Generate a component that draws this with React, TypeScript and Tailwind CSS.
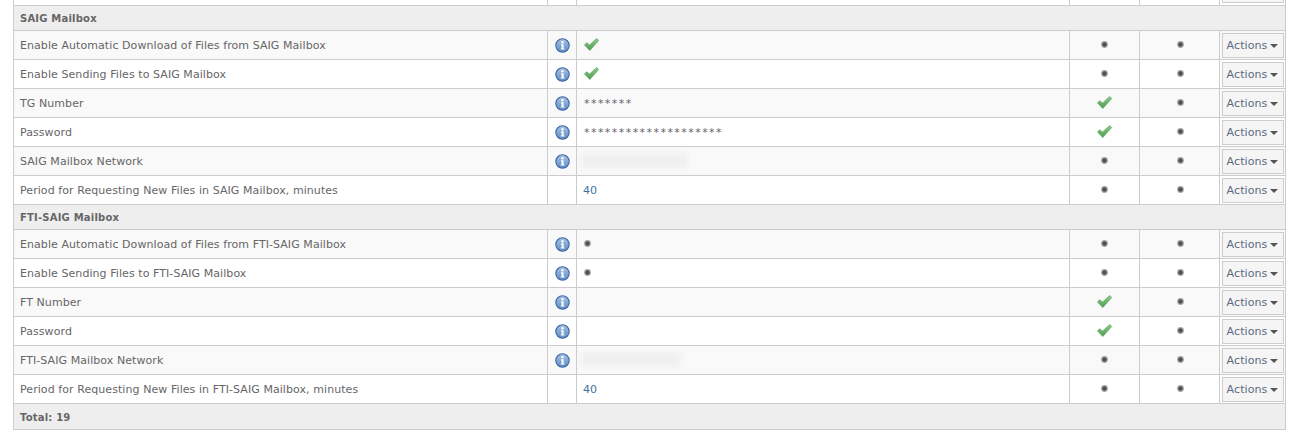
type Value = "check" | "dot" | "";

type Row = {
  label: string;
  info: boolean;
  value: React.ReactNode;
  own: Value;
  inherited: Value;
};

function InfoIcon() {
  return (
    <svg width="15" height="15" viewBox="0 0 15 15" className="block mx-auto">
      <defs>
        <linearGradient id="infoFill" x1="0" y1="0" x2="0" y2="1">
          <stop offset="0" stopColor="#a9c3e2" />
          <stop offset="1" stopColor="#5d8cc4" />
        </linearGradient>
      </defs>
      <circle cx="7.5" cy="7.5" r="6.7" fill="url(#infoFill)" stroke="#3f68a8" strokeWidth="1.1" />
      <circle cx="7.5" cy="4.2" r="1.2" fill="#fff" />
      <path d="M6 6.3h2.6v4.2h.9v1.1H5.7v-1.1h.9V7.4H6z" fill="#fff" />
    </svg>
  );
}

function CheckIcon() {
  return (
    <svg width="15" height="13" viewBox="0 0 15 13" className="block">
      <defs>
        <linearGradient id="checkFill" x1="0" y1="0" x2="0" y2="1">
          <stop offset="0" stopColor="#8ccb8c" />
          <stop offset="1" stopColor="#4f9d50" />
        </linearGradient>
      </defs>
      <path d="M.5 7 2.6 4.7 5.6 7 12.7.4 14.7 2.5 5.8 12.6z" fill="url(#checkFill)" stroke="#55a056" strokeWidth="0.6" strokeLinejoin="round" />
    </svg>
  );
}

function Dot() {
  return (
    <svg width="7" height="7" viewBox="0 0 7 7" className="block">
      <circle cx="3.5" cy="3.5" r="3.4" fill="#a8a8a8" />
      <circle cx="3.5" cy="3.5" r="2.2" fill="#505050" />
    </svg>
  );
}

function Mark({ kind }: { kind: Value }) {
  if (kind === "check") return <CheckIcon />;
  if (kind === "dot") return <Dot />;
  return null;
}

function ActionsButton() {
  return (
    <button className="flex h-[25px] w-[62px] items-center justify-center gap-[3px] border border-[#cccccc] bg-[#f5f5f5] pt-[2px] text-[11px] tracking-[0.1px] text-[#5b6b80]">
      Actions
      <span className="h-0 w-0 border-x-[4px] border-t-[4px] border-x-transparent border-t-[#555555]" />
    </button>
  );
}

function Blurred({ width }: { width: string }) {
  return <div className={`-ml-[3px] h-[15px] bg-[#f0f0f0] blur-[2px] ${width}`} />;
}

function Link40() {
  return <span className="-ml-[1px] block pt-[3px] tracking-[0.1px] text-[#3f739f]">40</span>;
}

function Stars({ text }: { text: string }) {
  return <span className="block pt-[3px] tracking-[1.45px]">{text}</span>;
}

const saig: Row[] = [
  { label: "Enable Automatic Download of Files from SAIG Mailbox", info: true, value: <CheckIcon />, own: "dot", inherited: "dot" },
  { label: "Enable Sending Files to SAIG Mailbox", info: true, value: <CheckIcon />, own: "dot", inherited: "dot" },
  { label: "TG Number", info: true, value: <Stars text="*******" />, own: "check", inherited: "dot" },
  { label: "Password", info: true, value: <Stars text="********************" />, own: "check", inherited: "dot" },
  { label: "SAIG Mailbox Network", info: true, value: <Blurred width="w-[106px]" />, own: "dot", inherited: "dot" },
  { label: "Period for Requesting New Files in SAIG Mailbox, minutes", info: false, value: <Link40 />, own: "dot", inherited: "dot" },
];

const fti: Row[] = [
  { label: "Enable Automatic Download of Files from FTI-SAIG Mailbox", info: true, value: <Dot />, own: "dot", inherited: "dot" },
  { label: "Enable Sending Files to FTI-SAIG Mailbox", info: true, value: <Dot />, own: "dot", inherited: "dot" },
  { label: "FT Number", info: true, value: "", own: "check", inherited: "dot" },
  { label: "Password", info: true, value: "", own: "check", inherited: "dot" },
  { label: "FTI-SAIG Mailbox Network", info: true, value: <Blurred width="w-[100px]" />, own: "dot", inherited: "dot" },
  { label: "Period for Requesting New Files in FTI-SAIG Mailbox, minutes", info: false, value: <Link40 />, own: "dot", inherited: "dot" },
];

const td = "border border-[#cccccc] p-0";

function DataRow({ row, odd }: { row: Row; odd: boolean }) {
  return (
    <tr className={`h-[29px] ${odd ? "bg-[#f9f9f9]" : "bg-white"}`}>
      <td className={`${td} pl-[6px] pt-[3px] tracking-[0.07px]`}>{row.label}</td>
      <td className={`${td} pt-[1px]`}>{row.info && <InfoIcon />}</td>
      <td className={`${td} pl-[7px]`}>{row.value}</td>
      <td className={td}>
        <div className="flex justify-center">
          <Mark kind={row.own} />
        </div>
      </td>
      <td className={td}>
        <div className="flex justify-center pl-[1px]">
          <Mark kind={row.inherited} />
        </div>
      </td>
      <td className={`${td} pt-[1px]`}>
        <div className="flex justify-center">
          <ActionsButton />
        </div>
      </td>
    </tr>
  );
}

function HeaderRow({ title, height, pad }: { title: string; height: string; pad: string }) {
  return (
    <tr className={`${height} bg-[#eeeeee]`}>
      <td colSpan={6} className={`${td} pl-[6px] text-[10px] font-bold tracking-[0.2px] ${pad}`}>
        {title}
      </td>
    </tr>
  );
}

export default function App() {
  return (
    <div className="min-h-[434px] bg-white pl-[13px] text-[11px] text-[#666666] font-['DejaVu_Sans',sans-serif]">
      <table className="w-[1272px] table-fixed border-collapse">
        <colgroup>
          <col className="w-[534px]" />
          <col className="w-[29px]" />
          <col className="w-[493px]" />
          <col className="w-[70px]" />
          <col className="w-[80px]" />
          <col className="w-[66px]" />
        </colgroup>
        <tbody>
          <tr className="h-[5px] bg-white">
            <td className="border-x border-b border-[#cccccc] p-0" />
            <td className="border-x border-b border-[#cccccc] p-0" />
            <td className="border-x border-b border-[#cccccc] p-0" />
            <td className="border-x border-b border-[#cccccc] p-0" />
            <td className="border-x border-b border-[#cccccc] p-0" />
            <td className="border-x border-b border-[#cccccc] p-0 align-top">
              <div className="mx-auto h-[3px] w-[62px] border-x border-b border-[#cccccc] bg-[#f5f5f5]" />
            </td>
          </tr>
          <HeaderRow title="SAIG Mailbox" height="h-[25px]" pad="pt-[1px]" />
          {saig.map((row, i) => (
            <DataRow key={row.label} row={row} odd={i % 2 === 0} />
          ))}
          <HeaderRow title="FTI-SAIG Mailbox" height="h-[25px]" pad="pt-[1px]" />
          {fti.map((row, i) => (
            <DataRow key={row.label} row={row} odd={i % 2 === 0} />
          ))}
          <HeaderRow title="Total: 19" height="h-[26px]" pad="pt-[3px]" />
        </tbody>
      </table>
    </div>
  );
}
